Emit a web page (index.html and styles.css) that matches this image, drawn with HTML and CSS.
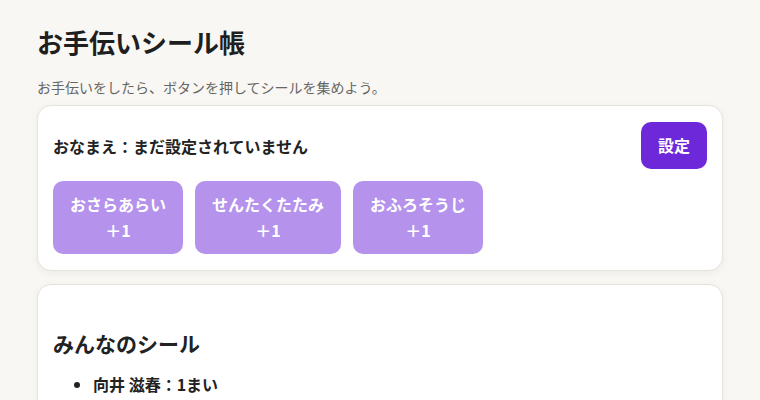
FILE: index.html
```html
<!DOCTYPE html>
<html lang="ja">
<head>
<meta charset="utf-8">
<title>お手伝いシール帳</title>
<link rel="stylesheet" href="styles.css">
</head>
<body>
<main class="app">
  <h1 class="title">お手伝いシール帳</h1>
  <p class="lead">お手伝いをしたら、ボタンを押してシールを集めよう。</p>
  <section class="card">
    <div class="name-row">
      <span class="name">おなまえ：まだ設定されていません</span>
      <button class="btn-primary">設定</button>
    </div>
    <div class="chores">
      <button class="chore" disabled>おさらあらい<br>＋1</button>
      <button class="chore" disabled>せんたくたたみ<br>＋1</button>
      <button class="chore" disabled>おふろそうじ<br>＋1</button>
    </div>
  </section>
  <section class="card card-list">
    <h2 class="list-title">みんなのシール</h2>
    <ul class="list">
      <li>向井 滋春：1まい</li>
    </ul>
  </section>
</main>
</body>
</html>
```

FILE: styles.css
```css
* { box-sizing: border-box; }
html, body { margin: 0; padding: 0; }
body {
  background: #f9f7f3;
  color: #222;
  font-family: "Noto Sans CJK JP", "Noto Sans", sans-serif;
}
.app {
  padding: 22px 37px;
}
.title {
  margin: 0;
  font-size: 26px;
  font-weight: 700;
  line-height: 40px;
  color: #1f1f1f;
}
.lead {
  margin: 15px 0 0;
  font-size: 14px;
  line-height: 20px;
  color: #666;
}
.card {
  margin-top: 8px;
  background: #fff;
  border: 1px solid #e6e2dc;
  border-radius: 14px;
  padding: 16px 15px;
  box-shadow: 0 2px 8px rgba(0,0,0,0.05);
}
.name-row {
  display: flex;
  align-items: center;
  justify-content: space-between;
}
.name {
  font-size: 16px;
  font-weight: 700;
  color: #222;
}
.btn-primary {
  font-family: inherit;
  font-size: 16px;
  font-weight: 700;
  line-height: 24px;
  color: #fff;
  background: #6d28d9;
  border: none;
  border-radius: 10px;
  padding: 11px 17px 12px;
}
.chores {
  display: flex;
  gap: 12px;
  margin-top: 12px;
}
.chore {
  font-family: inherit;
  font-size: 16px;
  font-weight: 700;
  line-height: 26px;
  color: #fff;
  background: #6d28d9;
  opacity: 0.5;
  border: none;
  border-radius: 10px;
  padding: 10px 17px 11px;
  text-align: center;
}
.card-list {
  margin-top: 13px;
  padding-top: 29px;
}
.list-title {
  margin: 14px 0 0;
  font-size: 21px;
  line-height: 30px;
  font-weight: 700;
  color: #222;
}
.list {
  margin: 14px 0 0;
  padding-left: 40px;
  font-size: 16px;
  font-weight: 700;
  line-height: 24px;
}
```
